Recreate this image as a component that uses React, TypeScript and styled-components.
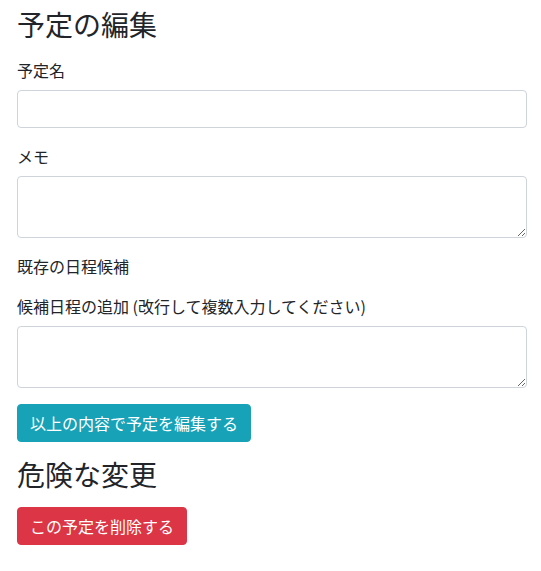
import React from "react";
import styled, { createGlobalStyle } from "styled-components";

const Global = createGlobalStyle`
  html, body { margin: 0; padding: 0; background: #fff; }
  body {
    font-family: "Noto Sans CJK JP", "Noto Sans", sans-serif;
    font-size: 16px;
    line-height: 1.5;
    color: #212529;
  }
  * { box-sizing: border-box; }
`;

const Page = styled.div`
  display: flex;
  flex-direction: column;
  padding: 8px 14px 0 17px;
`;

const Heading = styled.h3<{ $top?: number }>`
  margin: ${(p) => p.$top ?? 0}px 0 16px;
  font-size: 28px;
  line-height: 1.2;
  font-weight: 400;
`;

const Form = styled.form`
  display: flex;
  flex-direction: column;
`;

const Group = styled.div`
  display: flex;
  flex-direction: column;
  margin-bottom: 16px;
`;

const Label = styled.label`
  display: block;
  margin-bottom: 8px;
`;

const Note = styled.div`
  margin-bottom: 16px;
`;

const Input = styled.input`
  height: 38px;
  width: 100%;
  padding: 6px 12px;
  font: inherit;
  color: #495057;
  border: 1px solid #ced4da;
  border-radius: 4px;
  background: #fff;
`;

const Area = styled.textarea`
  height: 62px;
  width: 100%;
  padding: 6px 12px;
  font: inherit;
  color: #495057;
  border: 1px solid #ced4da;
  border-radius: 4px;
  background: #fff;
  resize: vertical;
`;

const Button = styled.button<{ $variant: "info" | "danger" }>`
  align-self: flex-start;
  padding: 6px 12px;
  font-family: inherit;
  font-size: 16px;
  line-height: 24px;
  color: #fff;
  border-radius: 4px;
  border: 1px solid ${(p) => (p.$variant === "info" ? "#17a2b8" : "#dc3545")};
  background: ${(p) => (p.$variant === "info" ? "#17a2b8" : "#dc3545")};
  cursor: pointer;
`;

export default function App() {
  return (
    <>
      <Global />
      <Page>
        <Heading>予定の編集</Heading>
        <Form onSubmit={(e) => e.preventDefault()}>
          <Group>
            <Label htmlFor="name">予定名</Label>
            <Input id="name" type="text" />
          </Group>
          <Group>
            <Label htmlFor="memo">メモ</Label>
            <Area id="memo" />
          </Group>
          <Note>既存の日程候補</Note>
          <Group>
            <Label htmlFor="cands">候補日程の追加 (改行して複数入力してください)</Label>
            <Area id="cands" />
          </Group>
          <Button $variant="info" type="submit">以上の内容で予定を編集する</Button>
        </Form>
        <Heading $top={16}>危険な変更</Heading>
        <Button $variant="danger" type="button">この予定を削除する</Button>
      </Page>
    </>
  );
}
